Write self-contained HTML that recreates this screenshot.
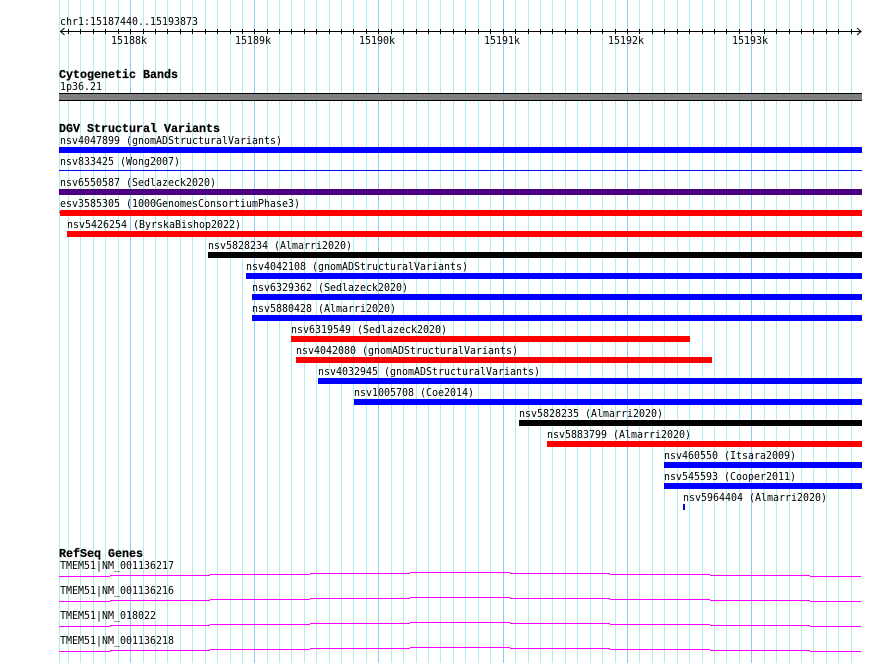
<!DOCTYPE html>
<html><head><meta charset="utf-8"><style>
html,body{margin:0;padding:0;background:#fff}
svg{display:block}
text{font-family:"DejaVu Sans Mono","Liberation Mono",monospace;font-size:11px;fill:#000;white-space:pre}
text.b{font-family:"Liberation Mono","DejaVu Sans Mono",monospace;font-size:11.67px;font-weight:bold;stroke:#000;stroke-width:.25px}
</style></head><body>
<svg width="890" height="663" viewBox="0 0 890 663" xmlns="http://www.w3.org/2000/svg">
<g shape-rendering="crispEdges" fill="none">
<path stroke="#afeeee" d="M59.5 0V663M68.5 0V663M80.5 0V663M93.5 0V663M105.5 0V663M118.5 0V663M143.5 0V663M155.5 0V663M167.5 0V663M180.5 0V663M192.5 0V663M205.5 0V663M217.5 0V663M230.5 0V663M242.5 0V663M267.5 0V663M279.5 0V663M291.5 0V663M304.5 0V663M316.5 0V663M329.5 0V663M341.5 0V663M353.5 0V663M366.5 0V663M391.5 0V663M403.5 0V663M416.5 0V663M428.5 0V663M440.5 0V663M453.5 0V663M465.5 0V663M478.5 0V663M490.5 0V663M515.5 0V663M528.5 0V663M540.5 0V663M552.5 0V663M565.5 0V663M577.5 0V663M590.5 0V663M602.5 0V663M615.5 0V663M639.5 0V663M652.5 0V663M664.5 0V663M677.5 0V663M689.5 0V663M702.5 0V663M714.5 0V663M726.5 0V663M739.5 0V663M764.5 0V663M776.5 0V663M789.5 0V663M801.5 0V663M813.5 0V663M826.5 0V663M838.5 0V663M851.5 0V663"/>
<path stroke="#87cefa" d="M130.5 0V663M254.5 0V663M378.5 0V663M503.5 0V663M627.5 0V663M751.5 0V663"/>
<path stroke="#000" d="M60 31.5H861M68.5 29V34M80.5 29V34M93.5 29V34M105.5 29V34M118.5 29V34M130.5 29V34M143.5 29V34M155.5 29V34M167.5 29V34M180.5 29V34M192.5 29V34M205.5 29V34M217.5 29V34M230.5 29V34M242.5 29V34M254.5 29V34M267.5 29V34M279.5 29V34M291.5 29V34M304.5 29V34M316.5 29V34M329.5 29V34M341.5 29V34M353.5 29V34M366.5 29V34M378.5 29V34M391.5 29V34M403.5 29V34M416.5 29V34M428.5 29V34M440.5 29V34M453.5 29V34M465.5 29V34M478.5 29V34M490.5 29V34M503.5 29V34M515.5 29V34M528.5 29V34M540.5 29V34M552.5 29V34M565.5 29V34M577.5 29V34M590.5 29V34M602.5 29V34M615.5 29V34M627.5 29V34M639.5 29V34M652.5 29V34M664.5 29V34M677.5 29V34M689.5 29V34M702.5 29V34M714.5 29V34M726.5 29V34M739.5 29V34M751.5 29V34M764.5 29V34M776.5 29V34M789.5 29V34M801.5 29V34M813.5 29V34M826.5 29V34M838.5 29V34M851.5 29V34"/>
<path stroke="#000" d="M64.5 28L60.5 31.5L64.5 35M857 28L861 31.5L857 35" shape-rendering="auto"/>
</g>
<g shape-rendering="crispEdges">
<rect x="59" y="93" width="803" height="8" fill="#000"/>
<rect x="59" y="94" width="803" height="6" fill="#808080"/>
<rect x="59" y="147" width="803" height="6" fill="#0000ff"/>
<rect x="59" y="170" width="803" height="1" fill="#0000ff"/>
<rect x="59" y="189" width="803" height="6" fill="#4b0082"/>
<rect x="59" y="212" width="1" height="1" fill="#ff0000"/>
<rect x="60" y="210" width="802" height="6" fill="#ff0000"/>
<rect x="67" y="231" width="795" height="6" fill="#ff0000"/>
<rect x="208" y="252" width="654" height="6" fill="#000"/>
<rect x="246" y="273" width="616" height="6" fill="#0000ff"/>
<rect x="252" y="294" width="610" height="6" fill="#0000ff"/>
<rect x="252" y="315" width="610" height="6" fill="#0000ff"/>
<rect x="291" y="336" width="399" height="6" fill="#ff0000"/>
<rect x="296" y="357" width="416" height="6" fill="#ff0000"/>
<rect x="318" y="378" width="544" height="6" fill="#0000ff"/>
<rect x="354" y="399" width="508" height="6" fill="#0000ff"/>
<rect x="519" y="420" width="343" height="6" fill="#000"/>
<rect x="547" y="441" width="315" height="6" fill="#ff0000"/>
<rect x="664" y="462" width="198" height="6" fill="#0000ff"/>
<rect x="664" y="483" width="198" height="6" fill="#0000ff"/>
<rect x="683" y="504" width="2" height="6" fill="#0000ff"/>
</g>
<g shape-rendering="crispEdges" fill="none" stroke="#ff00ff">
<path d="M59 576.5H110M110 575.5H210M210 574.5H310M310 573.5H410M410 572.5H510M510 573.5H610M610 574.5H710M710 575.5H810M810 576.5H861"/>
<path d="M59 601.5H110M110 600.5H210M210 599.5H310M310 598.5H410M410 597.5H510M510 598.5H610M610 599.5H710M710 600.5H810M810 601.5H861"/>
<path d="M59 626.5H110M110 625.5H210M210 624.5H310M310 623.5H410M410 622.5H510M510 623.5H610M610 624.5H710M710 625.5H810M810 626.5H861"/>
<path d="M59 651.5H110M110 650.5H210M210 649.5H310M310 648.5H410M410 647.5H510M510 648.5H610M610 649.5H710M710 650.5H810M810 651.5H861"/>
</g>
<text x="60" y="25" textLength="138" lengthAdjust="spacingAndGlyphs">chr1:15187440..15193873</text>
<text x="111" y="44" textLength="36" lengthAdjust="spacingAndGlyphs">15188k</text>
<text x="235" y="44" textLength="36" lengthAdjust="spacingAndGlyphs">15189k</text>
<text x="359" y="44" textLength="36" lengthAdjust="spacingAndGlyphs">15190k</text>
<text x="484" y="44" textLength="36" lengthAdjust="spacingAndGlyphs">15191k</text>
<text x="608" y="44" textLength="36" lengthAdjust="spacingAndGlyphs">15192k</text>
<text x="732" y="44" textLength="36" lengthAdjust="spacingAndGlyphs">15193k</text>
<text class="b" x="59" y="78" textLength="119" lengthAdjust="spacingAndGlyphs">Cytogenetic Bands</text>
<text x="60" y="90" textLength="42" lengthAdjust="spacingAndGlyphs">1p36.21</text>
<text class="b" x="59" y="132" textLength="161" lengthAdjust="spacingAndGlyphs">DGV Structural Variants</text>
<text x="60" y="144" textLength="222" lengthAdjust="spacingAndGlyphs">nsv4047899 (gnomADStructuralVariants)</text>
<text x="60" y="165" textLength="120" lengthAdjust="spacingAndGlyphs">nsv833425 (Wong2007)</text>
<text x="60" y="186" textLength="156" lengthAdjust="spacingAndGlyphs">nsv6550587 (Sedlazeck2020)</text>
<text x="60" y="207" textLength="240" lengthAdjust="spacingAndGlyphs">esv3585305 (1000GenomesConsortiumPhase3)</text>
<text x="67" y="228" textLength="174" lengthAdjust="spacingAndGlyphs">nsv5426254 (ByrskaBishop2022)</text>
<text x="208" y="249" textLength="144" lengthAdjust="spacingAndGlyphs">nsv5828234 (Almarri2020)</text>
<text x="246" y="270" textLength="222" lengthAdjust="spacingAndGlyphs">nsv4042108 (gnomADStructuralVariants)</text>
<text x="252" y="291" textLength="156" lengthAdjust="spacingAndGlyphs">nsv6329362 (Sedlazeck2020)</text>
<text x="252" y="312" textLength="144" lengthAdjust="spacingAndGlyphs">nsv5880428 (Almarri2020)</text>
<text x="291" y="333" textLength="156" lengthAdjust="spacingAndGlyphs">nsv6319549 (Sedlazeck2020)</text>
<text x="296" y="354" textLength="222" lengthAdjust="spacingAndGlyphs">nsv4042080 (gnomADStructuralVariants)</text>
<text x="318" y="375" textLength="222" lengthAdjust="spacingAndGlyphs">nsv4032945 (gnomADStructuralVariants)</text>
<text x="354" y="396" textLength="120" lengthAdjust="spacingAndGlyphs">nsv1005708 (Coe2014)</text>
<text x="519" y="417" textLength="144" lengthAdjust="spacingAndGlyphs">nsv5828235 (Almarri2020)</text>
<text x="547" y="438" textLength="144" lengthAdjust="spacingAndGlyphs">nsv5883799 (Almarri2020)</text>
<text x="664" y="459" textLength="132" lengthAdjust="spacingAndGlyphs">nsv460550 (Itsara2009)</text>
<text x="664" y="480" textLength="132" lengthAdjust="spacingAndGlyphs">nsv545593 (Cooper2011)</text>
<text x="683" y="501" textLength="144" lengthAdjust="spacingAndGlyphs">nsv5964404 (Almarri2020)</text>
<text class="b" x="59" y="557" textLength="84" lengthAdjust="spacingAndGlyphs">RefSeq Genes</text>
<text x="60" y="569" textLength="114" lengthAdjust="spacingAndGlyphs">TMEM51|NM_001136217</text>
<text x="60" y="594" textLength="114" lengthAdjust="spacingAndGlyphs">TMEM51|NM_001136216</text>
<text x="60" y="619" textLength="96" lengthAdjust="spacingAndGlyphs">TMEM51|NM_018022</text>
<text x="60" y="644" textLength="114" lengthAdjust="spacingAndGlyphs">TMEM51|NM_001136218</text>
</svg>
</body></html>
